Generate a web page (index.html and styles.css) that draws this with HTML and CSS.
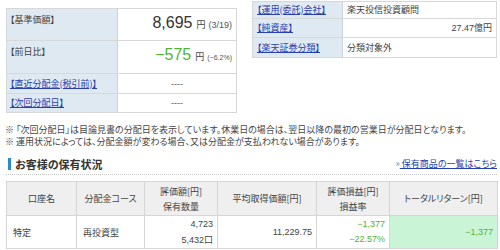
FILE: index.html
```html
<!DOCTYPE html>
<html lang="ja">
<head>
<meta charset="utf-8">
<link rel="stylesheet" href="styles.css">
</head>
<body>
<div class="top">
  <table class="info left">
    <colgroup><col class="lc"><col></colgroup>
    <tr class="r1"><th>【基準価額】</th><td class="val"><span class="num">8,695</span><span class="yen">円</span><span class="sub">(3/19)</span></td></tr>
    <tr class="r2"><th>【前日比】</th><td class="val"><span class="num green">−575</span><span class="yen">円</span><span class="sub small">(−6.2%)</span></td></tr>
    <tr class="r3"><th><a href="#">【直近分配金(税引前)】</a></th><td class="c">----</td></tr>
    <tr class="r4"><th><a href="#">【次回分配日】</a></th><td class="c">----</td></tr>
  </table>
  <table class="info right">
    <colgroup><col class="rc"><col></colgroup>
    <tr class="s1"><th><a href="#">【運用(委託)会社】</a></th><td>楽天投信投資顧問</td></tr>
    <tr class="s2"><th><a href="#">【純資産】</a></th><td class="r"><span class="n">27.47</span>億円</td></tr>
    <tr class="s3"><th><a href="#">【楽天証券分類】</a></th><td>分類対象外</td></tr>
  </table>
</div>
<div class="notes">
  <p>※ 「次回分配日」は目論見書の分配日を表示しています。休業日の場合は、翌日以降の最初の営業日が分配日となります。</p>
  <p>※ 運用状況によっては、分配金額が変わる場合、又は分配金が支払われない場合があります。</p>
</div>
<div class="head">
  <h2>お客様の保有状況</h2>
  <a href="#" class="more"><span class="arr">»</span> 保有商品の一覧はこちら</a>
</div>
<table class="hold">
  <colgroup><col class="h1"><col class="h2"><col class="h3"><col class="h4"><col class="h5"><col class="h6"></colgroup>
  <tr class="hr">
    <th>口座名</th><th>分配金コース</th><th>評価額[円]<br>保有数量</th><th>平均取得価額[円]</th><th>評価損益[円]<br>損益率</th><th>トータルリターン[円]</th>
  </tr>
  <tr class="dr">
    <td>特定</td><td>再投資型</td><td class="r"><span class="n">4,723</span><br><span class="n">5,432</span>口</td><td class="r n">11,229.75</td><td class="r green n">−1,377<br>−22.57%</td><td class="r green tot n">−1,377</td>
  </tr>
</table>
</body>
</html>
```

FILE: styles.css
```css
body {
  margin: 0;
  font-family: "Noto Sans CJK JP", "Liberation Sans", sans-serif;
  font-size: 9px;
  color: #444;
  background: #fff;
  font-feature-settings: "palt";
}
a { color: #2a3fae; text-decoration: underline; }
p { margin: 0; }
table { border-collapse: collapse; table-layout: fixed; }
.green { color: #4fb436; }
.n { font-family: "Liberation Sans", sans-serif; }

.top {
  display: flex;
  align-items: flex-start;
  gap: 15px;
  padding-left: 6px;
}
.info th, .info td {
  border: 1px solid #d8d8d8;
  line-height: 12px;
}
.info th {
  background: #dfe9f2;
  font-weight: normal;
  text-align: left;
  color: #444;
  border-right-color: #c9d3dc;
}
.left { margin-top: 8px; width: 231px; }
.left .lc { width: 111px; }
.left th { vertical-align: top; padding: 5px 3px 0 3px; }
.left td { padding: 0 4px; }
.r1 th { height: 26px; }
.r1 td { height: 27px; }
.r2 th { height: 27px; }
.r2 td { height: 28px; }
.r3 th, .r3 td { height: 19px; padding-top: 0; vertical-align: middle; }
.r4 th, .r4 td { height: 18px; padding-top: 0; vertical-align: middle; }
.val { vertical-align: top; text-align: right; padding-top: 4px !important; white-space: nowrap; line-height: 20px !important; }
.num { font-family: "Liberation Sans", sans-serif; font-size: 16px; color: #333; }
.num.green { color: #4fb436; }
.yen { font-size: 9px; margin-left: 4px; color: #444; }
.sub { font-family: "Liberation Sans", sans-serif; font-size: 9px; margin-left: 3px; color: #555; }
.sub.small { font-size: 7px; }
.c { text-align: center; color: #555; font-family: "Liberation Sans", sans-serif; }

.right { margin-top: 1px; width: 245px; }
.right .rc { width: 90px; }
.right th, .right td { padding: 0 4px; vertical-align: middle; }
.s1 th, .s1 td { height: 16px; }
.s2 th, .s2 td { height: 18px; }
.s3 th, .s3 td { height: 19px; }
.r { text-align: right; }

.notes {
  margin-top: 11px;
  padding-left: 5px;
  color: #444;
}
.notes p { height: 12px; line-height: 12px; white-space: nowrap; }

.head {
  margin: 9px 3px 0 6px;
  display: flex;
  justify-content: space-between;
  align-items: center;
  height: 14px;
  padding-bottom: 3px;
  border-bottom: 1px dotted #c8c8c8;
}
.head h2 {
  margin: 0 0 0 2px;
  font-size: 11px;
  font-weight: bold;
  color: #333;
  border-left: 3px solid #2a8ad0;
  padding-left: 4px;
  line-height: 12px;
  height: 12px;
}
.more { font-size: 9px; line-height: 12px; }
.arr { text-decoration: none; display: inline-block; color: #5a8fc8; }

.hold {
  margin: 6px 0 0 6px;
  width: 491px;
}
.h1 { width: 70px; }
.h2 { width: 68px; }
.h3 { width: 73px; }
.h4 { width: 99px; }
.h5 { width: 73px; }
.h6 { width: 108px; }
.hold th, .hold td {
  border: 1px solid #d6d6d6;
  line-height: 15px;
  vertical-align: middle;
}
.hold th {
  background: #efefef;
  font-weight: normal;
  color: #444;
  height: 33px;
  text-align: center;
  padding: 0 2px;
}
.hold td {
  height: 31px;
  padding: 0 4px 0 6px;
  color: #444;
}
.hold td.green { color: #4fb436; }
.hold .tot { background: #c9f4d6; }
```
